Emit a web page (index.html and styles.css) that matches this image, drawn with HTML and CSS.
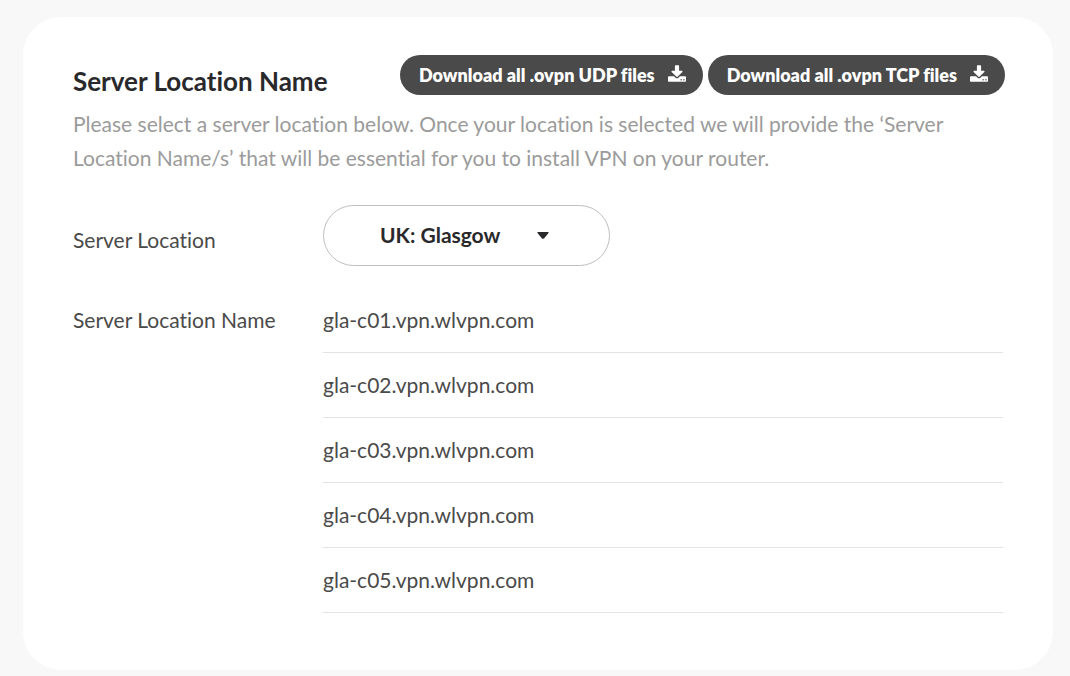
FILE: index.html
```html
<!DOCTYPE html>
<html lang="en">
<head>
    <meta charset="UTF-8">
    <meta name="viewport" content="width=device-width, initial-scale=1.0">
    <title>Server Location Name</title>
    <link rel="stylesheet" href="styles.css">
</head>
<body>
    <main class="card">
        <div class="card-header">
            <h1>Server Location Name</h1>
            <div class="downloads">
                <a class="download-button" href="#udp">
                    Download all .ovpn UDP files
                    <svg class="download-icon" viewBox="0 0 1664 1536" aria-hidden="true">
                        <path d="M1280 1344q0-26-19-45t-45-19-45 19-19 45 19 45 45 19 45-19 19-45zm256 0q0-26-19-45t-45-19-45 19-19 45 19 45 45 19 45-19 19-45zm128-224v320q0 40-28 68t-68 28H96q-40 0-68-28t-28-68v-320q0-40 28-68t68-28h465l135 136q58 56 136 56t136-56l136-136h464q40 0 68 28t28 68zm-325-569q17 41-14 70l-448 448q-18 19-45 19t-45-19L339 621q-31-29-14-70 17-39 59-39h256V64q0-26 19-45t45-19h256q26 0 45 19t19 45v448h256q42 0 59 39z"/>
                    </svg>
                </a>
                <a class="download-button" href="#tcp">
                    Download all .ovpn TCP files
                    <svg class="download-icon" viewBox="0 0 1664 1536" aria-hidden="true">
                        <path d="M1280 1344q0-26-19-45t-45-19-45 19-19 45 19 45 45 19 45-19 19-45zm256 0q0-26-19-45t-45-19-45 19-19 45 19 45 45 19 45-19 19-45zm128-224v320q0 40-28 68t-68 28H96q-40 0-68-28t-28-68v-320q0-40 28-68t68-28h465l135 136q58 56 136 56t136-56l136-136h464q40 0 68 28t28 68zm-325-569q17 41-14 70l-448 448q-18 19-45 19t-45-19L339 621q-31-29-14-70 17-39 59-39h256V64q0-26 19-45t45-19h256q26 0 45 19t19 45v448h256q42 0 59 39z"/>
                    </svg>
                </a>
            </div>
        </div>

        <p class="intro">Please select a server location below. Once your location is selected we will provide the ‘Server Location Name/s’ that will be essential for you to install VPN on your router.</p>

        <div class="field location">
            <label for="location">Server Location</label>
            <div class="select-wrap">
                <select id="location">
                    <option selected>UK: Glasgow</option>
                </select>
                <svg class="caret" viewBox="0 0 12 7" aria-hidden="true">
                    <path d="M1 0h10q1 0 .5 1L7 6.400Q6 7 5 6.400L.5 1Q0 0 1 0z"/>
                </svg>
            </div>
        </div>

        <div class="field">
            <h2 id="names-label">Server Location Name</h2>
            <ul class="server-list" aria-labelledby="names-label">
                <li>gla-c01.vpn.wlvpn.com</li>
                <li>gla-c02.vpn.wlvpn.com</li>
                <li>gla-c03.vpn.wlvpn.com</li>
                <li>gla-c04.vpn.wlvpn.com</li>
                <li>gla-c05.vpn.wlvpn.com</li>
            </ul>
        </div>
    </main>
</body>
</html>
```

FILE: styles.css
```css
* {
    margin: 0;
    padding: 0;
    box-sizing: border-box;
}

body {
    font-family: Lato, "Open Sans", sans-serif;
    font-size: 21px;
    line-height: 34px;
    font-variant-ligatures: none;
    color: #4a4a4a;
    background: #f8f8f8;
}

.card {
    margin: 17px 17px 6px 23px;
    padding: 38px 50px 57px;
    background: #fff;
    border-radius: 38px;
}

.card-header {
    display: flex;
    justify-content: space-between;
    align-items: flex-start;
    margin-right: -2px;
}

h1 {
    padding-top: 9px;
    font-size: 26px;
    font-weight: 700;
    color: #29292c;
}

.downloads {
    display: flex;
    gap: 5px;
}

.download-button {
    display: flex;
    align-items: center;
    gap: 13px;
    height: 40px;
    padding: 0 17px 0 19px;
    border-radius: 20px;
    background: #4a4a4a;
    color: #fff;
    font-size: 18px;
    font-weight: 800;
    text-decoration: none;
    white-space: nowrap;
}

.download-icon {
    width: 18px;
    height: 17px;
    margin-bottom: 3px;
    fill: currentColor;
}

.intro {
    margin-top: 9px;
    color: #9b9b9b;
}

.field {
    display: grid;
    grid-template-columns: 250px 1fr;
}

.location {
    margin: 30px 0 22px;
}

.location label {
    padding-top: 18px;
}

.select-wrap {
    position: relative;
    width: 287px;
}

select {
    display: block;
    width: 100%;
    height: 61px;
    padding: 0 80px 2px 56px;
    border: 1px solid #bfbfbf;
    border-radius: 31px;
    background: #fff;
    color: #29292c;
    font-family: inherit;
    font-size: 21px;
    font-weight: 700;
    appearance: none;
    cursor: pointer;
}

.caret {
    position: absolute;
    top: 27px;
    right: 61px;
    width: 12px;
    height: 7px;
    fill: #29292c;
    pointer-events: none;
}

h2 {
    padding-top: 15px;
    font-size: 21px;
    font-weight: 400;
}

.server-list {
    list-style: none;
}

.server-list li {
    padding: 15px 0;
    border-bottom: 1px solid #e3e3e3;
}
```
